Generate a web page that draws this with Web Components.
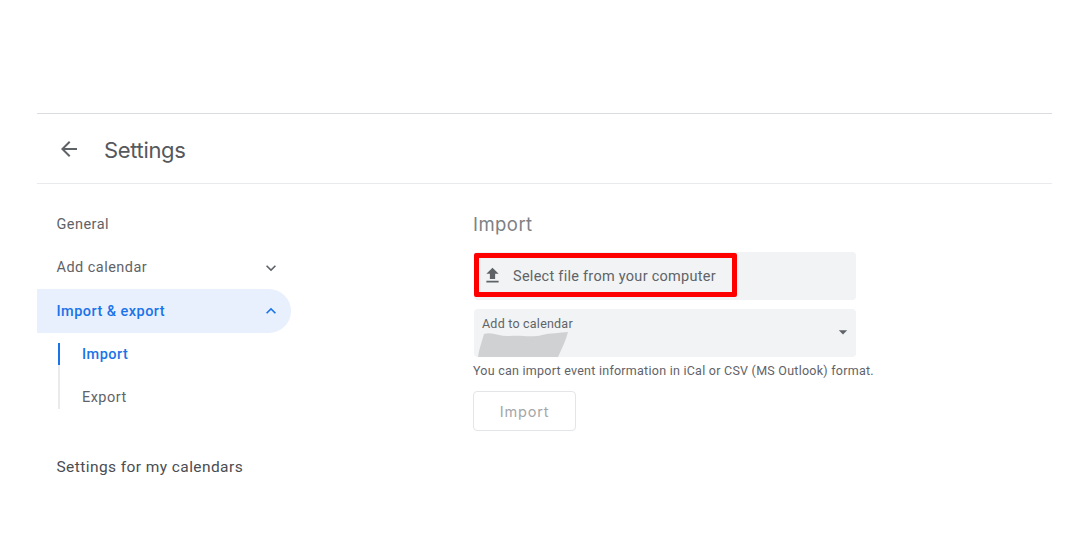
<!DOCTYPE html>
<html>
<head>
<meta charset="utf-8">
<title>Settings</title>
<style>
  html, body { margin: 0; background: #fff; }
  body { font-family: Roboto, "Liberation Sans", sans-serif; color: #5f6368; }
</style>
</head>
<body>
<settings-page></settings-page>

<script>
    // Shared icon paths (material 24px grid)
    const ICONS = {
        back: 'M20 11H7.83l5.59-5.59L12 4l-8 8 8 8 1.41-1.41L7.83 13H20v-2z',
        down: 'M7.41 8.59 12 13.17l4.59-4.58L18 10l-6 6-6-6z',
        up: 'M7.41 15.41 12 10.83l4.59 4.58L18 14l-6-6-6 6z',
        upload: 'M9 16h6v-6h4l-7-7-7 7h4v6zm-4 2h14v2H5v-2z',
        arrow: 'M7 10l5 5 5-5z'
    };

    function icon(name, size) {
        return `<svg width="${size}" height="${size}" viewBox="0 0 24 24" fill="currentColor"><path d="${ICONS[name]}"/></svg>`;
    }

    class BaseElement extends HTMLElement {
        constructor() {
            super();
            this.attachShadow({ mode: 'open' });
        }
        styles() { return ''; }
        template() { return '<slot></slot>'; }
        connectedCallback() {
            this.shadowRoot.innerHTML = `<style>${this.styles()}</style>${this.template()}`;
        }
    }

    class SettingsHeader extends BaseElement {
        styles() {
            return `
                :host { display: flex; align-items: center; height: 69px; border-top: 1px solid #dadce0; border-bottom: 1px solid #e8eaed; }
                .back { display: flex; margin-left: 20px; color: #5f6368; }
                h1 { margin: 2px 0 0 23px; font: 400 22px Inter, Roboto, sans-serif; letter-spacing: -0.35px; color: #55585c; }
            `;
        }
        template() {
            return `<span class="back">${icon('back', 24)}</span><h1><slot></slot></h1>`;
        }
    }

    class NavItem extends BaseElement {
        styles() {
            return `
                :host { display: flex; align-items: center; justify-content: space-between; box-sizing: border-box; width: 254px; height: 43.5px; padding: 0 10px 0 19.5px; font-size: 14.5px; letter-spacing: 0.46px; color: #5f6368; border-radius: 0 22px 22px 0; }
                :host([active]) { height: 44px; margin-top: -0.5px; background: #e8f0fe; color: #1a73e8; font-weight: 500; }
                :host([strong]) { padding-top: 1px; color: #4a4d51; font-size: 15.5px; letter-spacing: 0.42px; }
                svg { display: block; }
            `;
        }
        template() {
            const chevron = this.getAttribute('chevron');
            return `<span><slot></slot></span>${chevron ? icon(chevron, 20) : ''}`;
        }
    }

    class SubNav extends BaseElement {
        styles() {
            return `
                :host { display: flex; flex-direction: column; gap: 21.5px; margin: 10px 0 0 21px; border-left: 2px solid #e8eaed; width: 200px; }
            `;
        }
    }

    class SubNavItem extends BaseElement {
        styles() {
            return `
                :host { display: flex; align-items: center; position: relative; height: 22px; padding-left: 22px; font-size: 14.5px; letter-spacing: 0.46px; color: #5f6368; }
                :host([active]) { color: #1a73e8; font-weight: 500; }
                :host([active])::before { content: ""; position: absolute; left: -2px; top: 0; width: 2px; height: 22px; background: #1a73e8; }
            `;
        }
    }

    class FileField extends BaseElement {
        styles() {
            return `
                :host { display: flex; align-items: center; position: relative; width: 382px; height: 48px; margin-left: 1px; background: #f1f3f4; border-radius: 4px; color: #5f6368; font-size: 14.5px; letter-spacing: 0.27px; }
                .ic { display: flex; margin-left: 8px; margin-right: 10px; color: #5f6368; }
                .txt { padding-top: 1px; }
                .mark { position: absolute; left: 0; top: 1px; width: 263px; height: 44px; box-sizing: border-box; border: 5px solid #fe0000; border-radius: 2px; }
            `;
        }
        template() {
            return `<span class="ic">${icon('upload', 21)}</span><span class="txt"><slot></slot></span><span class="mark"></span>`;
        }
    }

    class SelectField extends BaseElement {
        styles() {
            return `
                :host { display: block; position: relative; width: 382px; height: 48px; margin-left: 1px; background: #f1f3f4; border-radius: 4px; }
                label { display: block; padding: 7px 0 0 8px; font-size: 12.5px; line-height: 16px; letter-spacing: 0.22px; color: #5f6368; }
                .blur { position: absolute; left: 2px; top: 19px; filter: blur(0.6px); }
                .arrow { position: absolute; right: 3px; top: 13px; display: flex; color: #5f6368; }
            `;
        }
        template() {
            return `
                <label><slot></slot></label>
                <svg class="blur" width="96" height="30" viewBox="0 0 96 30">
                    <path d="M8 6C16 3 24 9 34 8C46 7 56 10 66 7C74 5 84 5 92 4C90 12 86 20 82 29L2 29C3 21 6 13 8 6Z" fill="#d0d1d2"/>
                </svg>
                <span class="arrow">${icon('arrow', 20)}</span>
            `;
        }
    }

    class OutlineButton extends BaseElement {
        styles() {
            return `
                :host { display: flex; align-items: center; justify-content: center; box-sizing: border-box; width: 103px; height: 40px; padding-top: 2px; border: 1px solid #e3e5e8; border-radius: 4px; font: 400 14.5px Inter, Roboto, sans-serif; letter-spacing: 0.8px; color: #a4a6a9; }
            `;
        }
    }

    class ImportPanel extends BaseElement {
        styles() {
            return `
                :host { display: flex; flex-direction: column; align-items: flex-start; padding-top: 7px; }
                h2 { margin: 0 0 14px; height: 28px; font: 400 18.5px/28px Inter, Roboto, sans-serif; letter-spacing: 0.45px; color: #7d8185; }
                .gap { height: 9px; }
                p { margin: 6px 0 12px; font-size: 12.5px; line-height: 16px; letter-spacing: 0.25px; color: #5f6368; }
            `;
        }
        template() {
            return `
                <h2>Import</h2>
                <file-field>Select file from your computer</file-field>
                <div class="gap"></div>
                <select-field>Add to calendar</select-field>
                <p>You can import event information in iCal or CSV (MS Outlook) format.</p>
                <outline-button>Import</outline-button>
            `;
        }
    }

    class SettingsPage extends BaseElement {
        styles() {
            return `
                :host { display: block; padding: 113px 16px 0 37px; }
                .body { display: flex; padding-top: 18.5px; }
                nav { display: flex; flex-direction: column; width: 436px; flex: none; }
                .spacer { height: 36.5px; }
            `;
        }
        template() {
            return `
                <settings-header>Settings</settings-header>
                <div class="body">
                    <nav>
                        <nav-item>General</nav-item>
                        <nav-item chevron="down">Add calendar</nav-item>
                        <nav-item chevron="up" active>Import &amp; export</nav-item>
                        <sub-nav>
                            <sub-nav-item active>Import</sub-nav-item>
                            <sub-nav-item>Export</sub-nav-item>
                        </sub-nav>
                        <div class="spacer"></div>
                        <nav-item strong>Settings for my calendars</nav-item>
                    </nav>
                    <import-panel></import-panel>
                </div>
            `;
        }
    }

    const elements = {
        'settings-header': SettingsHeader,
        'nav-item': NavItem,
        'sub-nav': SubNav,
        'sub-nav-item': SubNavItem,
        'file-field': FileField,
        'select-field': SelectField,
        'outline-button': OutlineButton,
        'import-panel': ImportPanel,
        'settings-page': SettingsPage
    };
    Object.keys(elements).forEach(name => customElements.define(name, elements[name]));
</script>
</body>
</html>
